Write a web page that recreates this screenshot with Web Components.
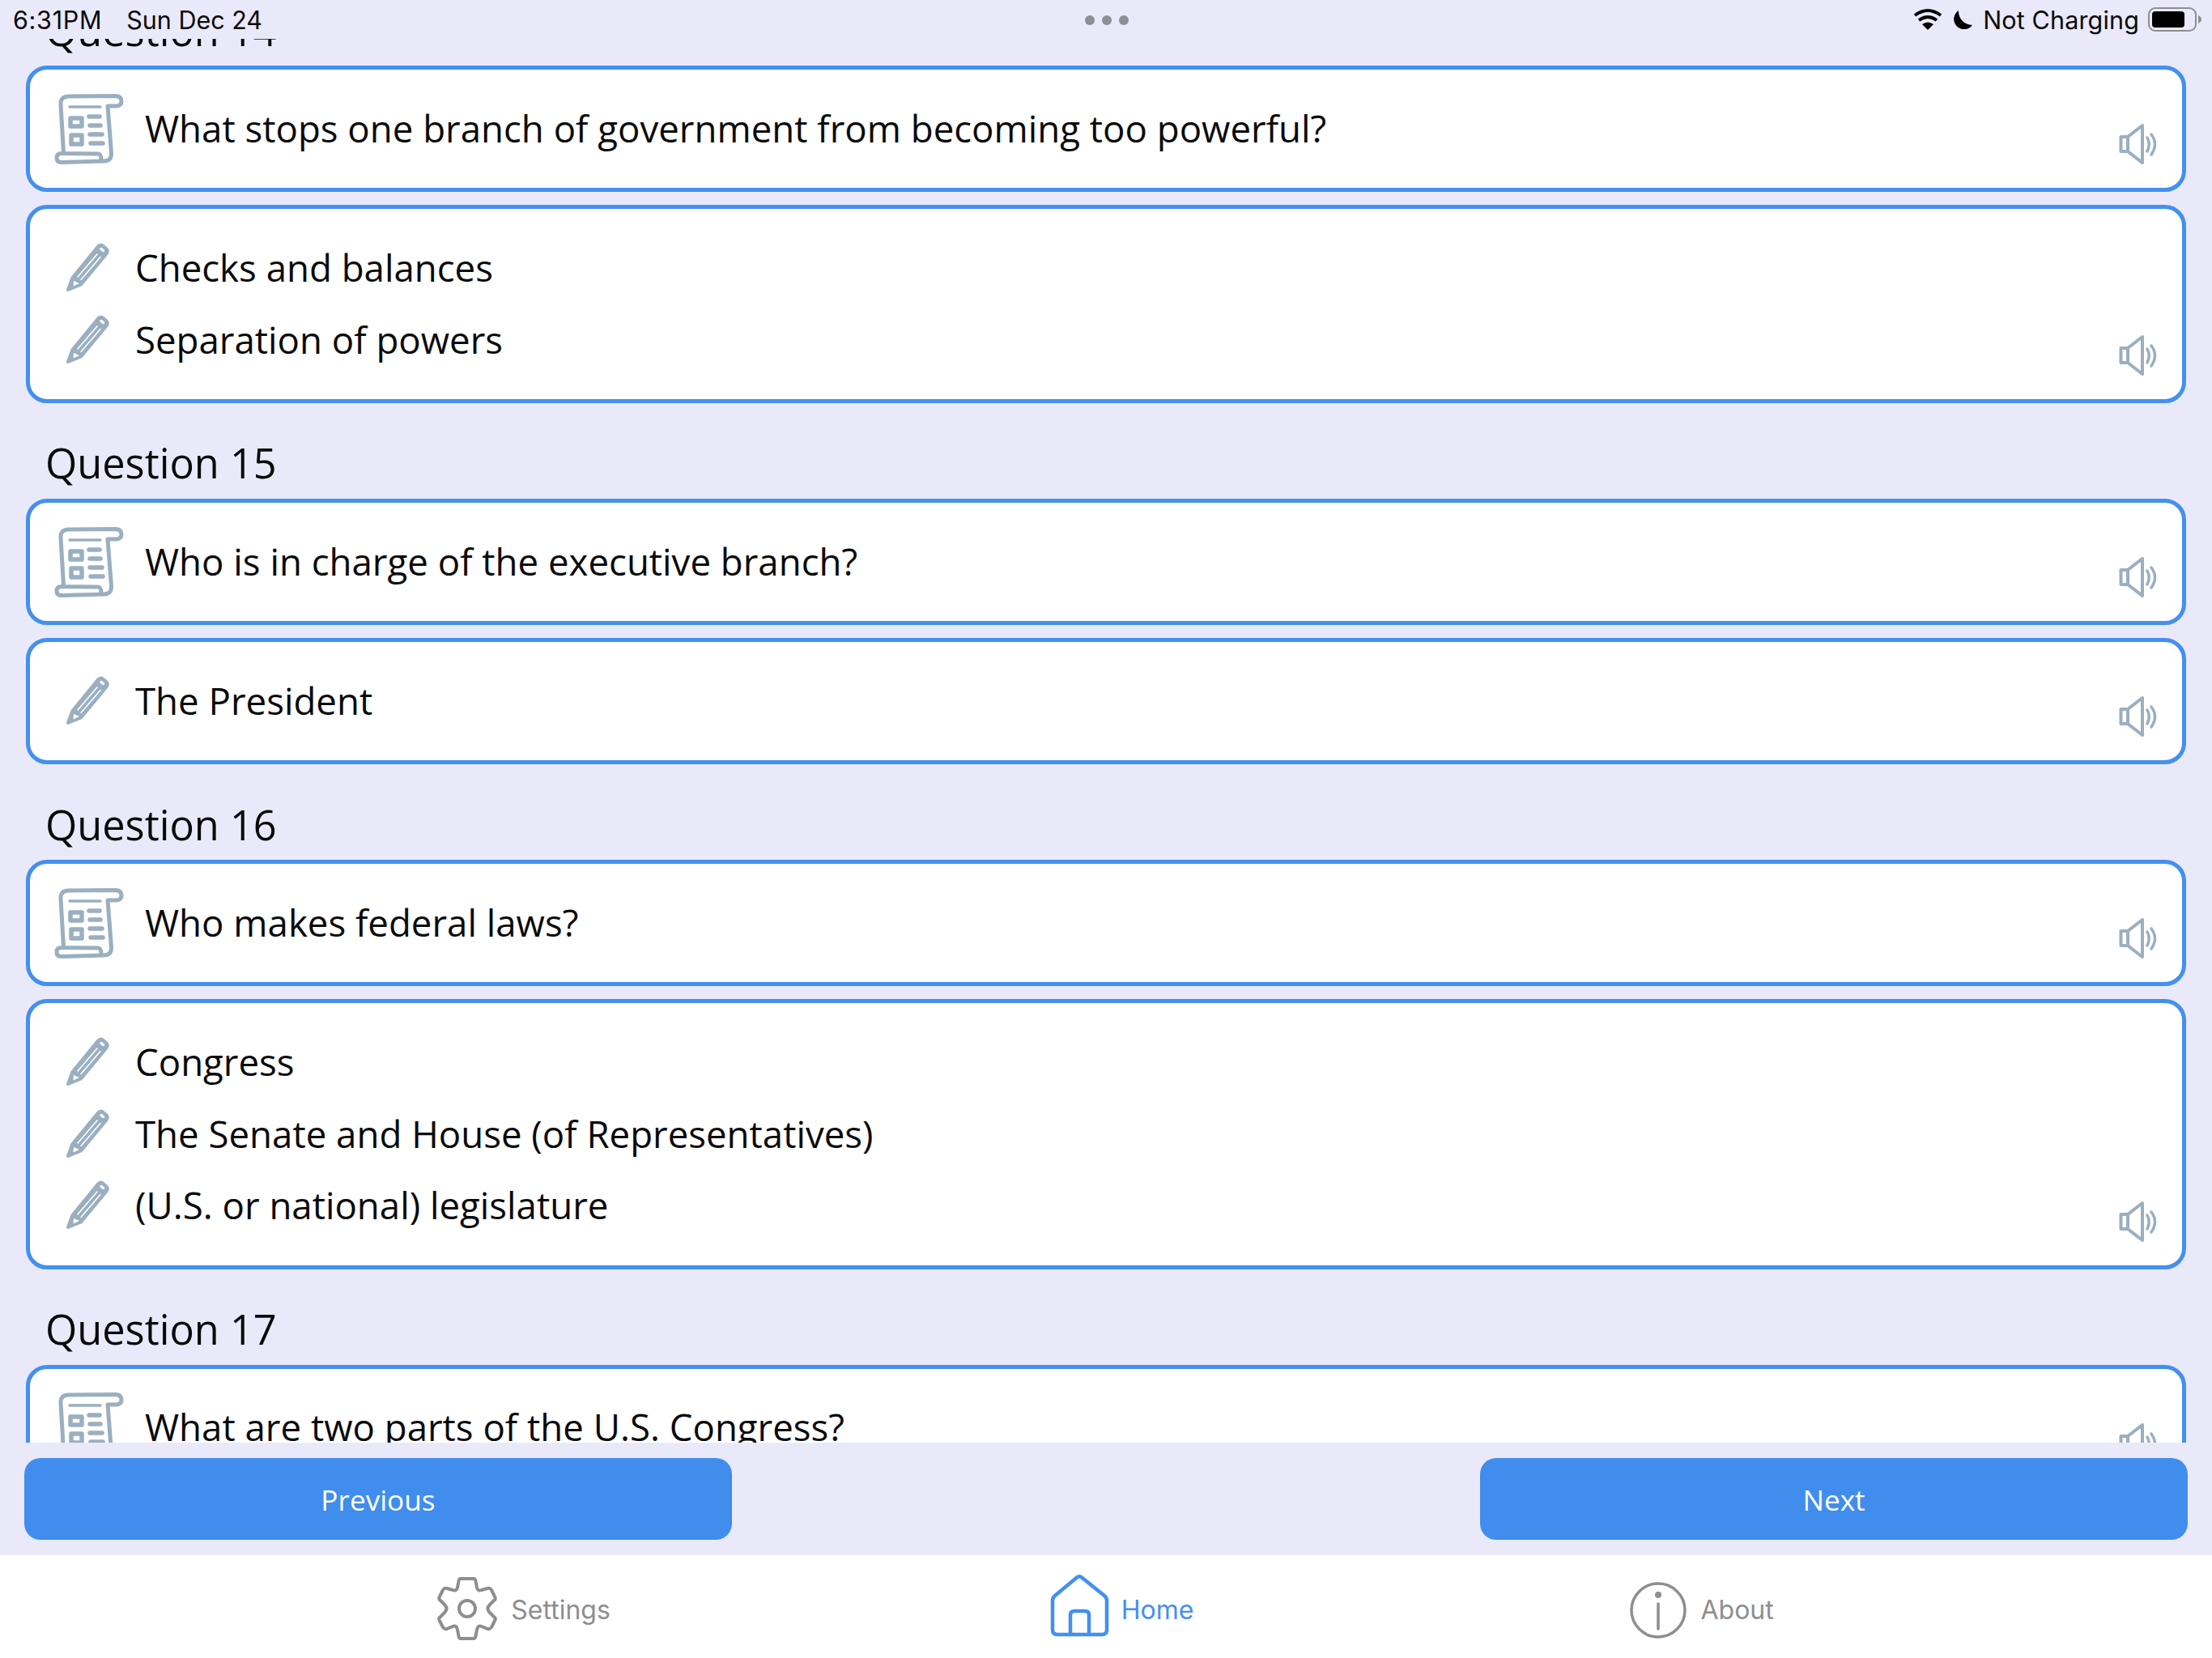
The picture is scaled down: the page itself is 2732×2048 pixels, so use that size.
<!DOCTYPE html>
<html lang="en">
<head>
<meta charset="utf-8">
<title>Questions</title>
<style>
    html, body { margin: 0; padding: 0; height: 100%; overflow: hidden; background: #eae9fa; }
</style>
</head>
<body>

<study-app>
    <status-bar slot="status"></status-bar>

    <question-group heading="Question 14">
        <question-card><qa-row icon="scroll">What stops one branch of government from becoming too powerful?</qa-row></question-card>
        <question-card>
            <qa-row>Checks and balances</qa-row>
            <qa-row>Separation of powers</qa-row>
        </question-card>
    </question-group>

    <question-group heading="Question 15">
        <question-card><qa-row icon="scroll">Who is in charge of the executive branch?</qa-row></question-card>
        <question-card><qa-row>The President</qa-row></question-card>
    </question-group>

    <question-group heading="Question 16">
        <question-card><qa-row icon="scroll">Who makes federal laws?</qa-row></question-card>
        <question-card>
            <qa-row>Congress</qa-row>
            <qa-row>The Senate and House (of Representatives)</qa-row>
            <qa-row>(U.S. or national) legislature</qa-row>
        </question-card>
    </question-group>

    <question-group heading="Question 17">
        <question-card><qa-row icon="scroll">What are two parts of the U.S. Congress?</qa-row></question-card>
    </question-group>

    <pager-bar slot="pager">
        <pager-button>Previous</pager-button>
        <pager-button>Next</pager-button>
    </pager-bar>

    <tab-bar slot="tabs">
        <tab-item icon="settings">Settings</tab-item>
        <tab-item icon="home" active>Home</tab-item>
        <tab-item icon="about">About</tab-item>
    </tab-bar>
</study-app>

<script>
// 所有图标都放这里，按名字取
const ICONS = {
    scroll: `<svg width="110" height="110" viewBox="0 3 110 110" fill="none" stroke="#9aafc0" stroke-linecap="round" stroke-linejoin="round">
        <path stroke-width="5" d="M28.5 88 25 28Q24.5 18 35 18L93 17.5Q100 18 100 24 100 30 93 30L83 30 87.5 88Q88 98 78 98L26 99.5Q20 99.5 20 94 20 88.5 26 88.5L72 89Q75 90 75 97"/>
        <path stroke-width="3.500" d="M36 31H74"/>
        <rect x="37" y="45" width="14" height="10" stroke-width="5.500"/>
        <rect x="38" y="66" width="13" height="11" stroke-width="5.500"/>
        <path stroke-width="5.500" d="M60 43H73M61 54H74M61 65H76M62 76H77"/>
    </svg>`,
    pencil: `<svg width="80" height="80" viewBox="0 2 80 80" fill="none" stroke-linecap="round" stroke-linejoin="round">
        <path fill="#9aafc0" stroke="#9aafc0" stroke-width="4" d="M14 69 19.5 54 51 15.5Q54 12 57.5 15L61 18Q64 21 61.5 24.5L30 62.5Z"/>
        <path stroke="#fff" stroke-width="1.6" d="M26 53 50 25M30 56.5 54 28.500"/>
        <path stroke="#fff" stroke-width="3.500" d="M55 18.500 57.500 20.500"/>
        <path fill="#fff" stroke="none" d="M21 58 28 61 20.500 64.500Z"/>
    </svg>`,
    speaker: `<svg width="52" height="52" viewBox="76 22 52 52" fill="none" stroke="#9aafc0" stroke-linecap="round" stroke-linejoin="round">
        <path stroke-width="4" d="M88 39H79.500V57H88L106 71V25Z M88 39V57"/>
        <path stroke-width="3.500" d="M112 40Q116.500 48 112 57M117 36Q126 48 117 61"/>
    </svg>`,
    settings: `<svg width="120" height="110" viewBox="0 0 120 110" fill="none" stroke="#8e8e8e" stroke-width="4" stroke-linejoin="round" style="margin:-16px -14px -9px -30px">
        <path d="M60 20H76Q78 20 78.500 23L80 31Q81 36 86 34L93 32Q96 31 98 34L102 42Q104 45 101 47L96 52Q91 57 96 62L101 67Q104 69 102 72L98 80Q96 83 93 82L86 79Q81 77 80 83L78.500 91Q78 94 76 94H60Q58 94 57.500 91L56 83Q55 77 50 79L43 82Q40 83 38 80L34 72Q32 69 35 67L40 62Q45 57 40 52L35 47Q32 45 34 42L38 34Q40 31 43 32L50 34Q55 36 56 31L57.500 23Q58 20 60 20Z"/>
        <circle cx="68" cy="57" r="10"/>
    </svg>`,
    home: `<svg width="120" height="110" viewBox="0 0 120 110" fill="none" stroke="#4390ee" stroke-width="4.500" stroke-linejoin="round" style="margin:-17px -31px -7px -20px">
        <path d="M50 19.500Q53 17 56 19.500L84 42Q87 44.500 87 48V84Q87 90 81 90H26Q20 90 20 84V48Q20 44.500 23 42Z"/>
        <path d="M42 90V66Q42 61 47 61H60Q65 61 65 66V90"/>
    </svg>`,
    about: `<svg width="72" height="72" viewBox="0 0 72 72" fill="none" stroke="#8e8e8e" stroke-linecap="round">
        <circle cx="36" cy="36" r="33" stroke-width="3.500"/>
        <circle cx="36" cy="17" r="4" fill="#8e8e8e" stroke="none"/>
        <path stroke-width="3.500" d="M36 28V59"/>
    </svg>`
};

class StudyApp extends HTMLElement {
    constructor() {
        super();
        this.attachShadow({ mode: 'open' });
        this.shadowRoot.innerHTML = `
            <style>
                :host { display: flex; flex-direction: column; height: 2048px; background: #eae9fa; }
                .scroller { flex: 1; min-height: 0; overflow: hidden; }
                .content { margin-top: -85px; display: flex; flex-direction: column; }
            </style>
            <slot name="status"></slot>
            <div class="scroller"><div class="content"><slot></slot></div></div>
            <slot name="pager"></slot>
            <slot name="tabs"></slot>
        `;
    }
}

class StatusBar extends HTMLElement {
    constructor() {
        super();
        this.attachShadow({ mode: 'open' });
        this.shadowRoot.innerHTML = `
            <style>
                :host { display: grid; grid-template-columns: 1fr auto 1fr; align-items: center; height: 48px; padding: 0 13px 0 16px; box-sizing: border-box;
                        font: 400 30.5px Inter, "Liberation Sans", sans-serif; color: #0a0a0a; }
                .left { display: flex; gap: 30px; }
                .time { letter-spacing: 0.7px; }
                .dots { display: flex; gap: 9px; margin-top: 1px; margin-left: -2px; }
                .dots i { width: 12px; height: 12px; border-radius: 50%; background: #8e8e93; }
                .right { display: flex; align-items: center; justify-content: flex-end; }
                svg { display: block; }
                .label { margin: 0 11px 0 12px; letter-spacing: 0.15px; }
            </style>
            <div class="left"><span class="time">6:31PM</span><span>Sun Dec 24</span></div>
            <div class="dots"><i></i><i></i><i></i></div>
            <div class="right">
                <svg width="36" height="28" viewBox="0 0 36 28" fill="none" stroke="#000" stroke-width="4">
                    <path d="M2 9Q18 -3 34 9M7 15Q18 7 29 15"/>
                    <path fill="#000" stroke="none" d="M11 20Q18 15 25 20L18 27Z"/>
                </svg>
                <svg width="26" height="24" viewBox="0 0 26 24" style="margin-left:12px">
                    <path d="M8 1A12.600 12.600 0 1 0 25 19 17 17 0 0 1 8 1Z"/>
                </svg>
                <span class="label">Not Charging</span>
                <svg width="66" height="30" viewBox="0 0 66 30">
                    <rect x="1" y="1" width="58" height="28" rx="8" fill="none" stroke="#8e8e93" stroke-width="2"/>
                    <rect x="5" y="5" width="40" height="20" rx="4"/>
                    <path fill="#8e8e93" d="M62 10Q66 12 66 15T62 20Z"/>
                </svg>
            </div>
        `;
    }
}

class QuestionGroup extends HTMLElement {
    constructor() {
        super();
        this.attachShadow({ mode: 'open' });
    }

    connectedCallback() {
        this.shadowRoot.innerHTML = `
            <style>
                :host { display: flex; flex-direction: column; gap: 16px; padding: 0 32px; }
                h2 { margin: 0 0 -16px; height: 118px; box-sizing: border-box; padding: 0 0 10.5px 24px; display: flex; align-items: flex-end;
                     font: 400 50.5px/66px "Open Sans", sans-serif; color: #0a0a0a; }
            </style>
            <h2>${this.getAttribute('heading')}</h2>
            <slot></slot>
        `;
    }
}

class QuestionCard extends HTMLElement {
    constructor() {
        super();
        this.attachShadow({ mode: 'open' });
        this.shadowRoot.innerHTML = `
            <style>
                :host { display: flex; background: #fff; border: 5px solid #4390ee; border-radius: 26px; box-sizing: border-box; padding: 28.4px 0 29px; }
                .rows { flex: 1; min-width: 0; display: flex; flex-direction: column; }
                .sound { align-self: flex-end; margin: 0 27px -1px 0; height: 52px; }
                svg { display: block; }
            </style>
            <div class="rows"><slot></slot></div>
            <div class="sound">${ICONS.speaker}</div>
        `;
    }
}

class QaRow extends HTMLElement {
    constructor() {
        super();
        this.attachShadow({ mode: 'open' });
    }

    connectedCallback() {
        const isQuestion = this.getAttribute('icon') === 'scroll';
        this.shadowRoot.innerHTML = `
            <style>
                :host { display: flex; align-items: center; height: 88.7px; font: 400 45.6px "Open Sans", sans-serif; color: #0a0a0a; }
                .icon { flex: none; display: flex; margin-left: ${isQuestion ? '13px' : '33px'}; margin-right: ${isQuestion ? '19px' : '17px'}; }
                .text { margin-top: -2px; }
                svg { display: block; }
            </style>
            <div class="icon">${isQuestion ? ICONS.scroll : ICONS.pencil}</div>
            <span class="text"><slot></slot></span>
        `;
    }
}

class PagerBar extends HTMLElement {
    constructor() {
        super();
        this.attachShadow({ mode: 'open' });
        this.shadowRoot.innerHTML = `
            <style>
                :host { display: flex; justify-content: space-between; padding: 19px 30px; }
            </style>
            <slot></slot>
        `;
    }
}

class PagerButton extends HTMLElement {
    constructor() {
        super();
        this.attachShadow({ mode: 'open' });
        this.shadowRoot.innerHTML = `
            <style>
                :host { display: flex; align-items: center; justify-content: center; width: 874px; height: 101px; border-radius: 20px;
                        background: #408ded; color: #fff; font: 400 35.2px "Open Sans", sans-serif; }
            </style>
            <slot></slot>
        `;
    }
}

class TabBar extends HTMLElement {
    constructor() {
        super();
        this.attachShadow({ mode: 'open' });
        this.shadowRoot.innerHTML = `
            <style>
                :host { display: flex; justify-content: center; align-items: center; gap: 540px; height: 127px; box-sizing: border-box; padding: 8px 2px 0 0; background: #fff; }
            </style>
            <slot></slot>
        `;
    }
}

class TabItem extends HTMLElement {
    constructor() {
        super();
        this.attachShadow({ mode: 'open' });
    }

    connectedCallback() {
        const active = this.hasAttribute('active');
        this.shadowRoot.innerHTML = `
            <style>
                :host { display: flex; align-items: center; gap: 16px; color: ${active ? '#4390ee' : '#8e8e8e'}; font: 400 32px Inter, "Liberation Sans", sans-serif; }
                :host([active]) { margin: 0 -2px 0 6px; }
                svg { display: block; }
            </style>
            ${ICONS[this.getAttribute('icon')]}
            <span><slot></slot></span>
        `;
    }
}

customElements.define('study-app', StudyApp);
customElements.define('status-bar', StatusBar);
customElements.define('question-group', QuestionGroup);
customElements.define('question-card', QuestionCard);
customElements.define('qa-row', QaRow);
customElements.define('pager-bar', PagerBar);
customElements.define('pager-button', PagerButton);
customElements.define('tab-bar', TabBar);
customElements.define('tab-item', TabItem);
</script>
</body>
</html>
